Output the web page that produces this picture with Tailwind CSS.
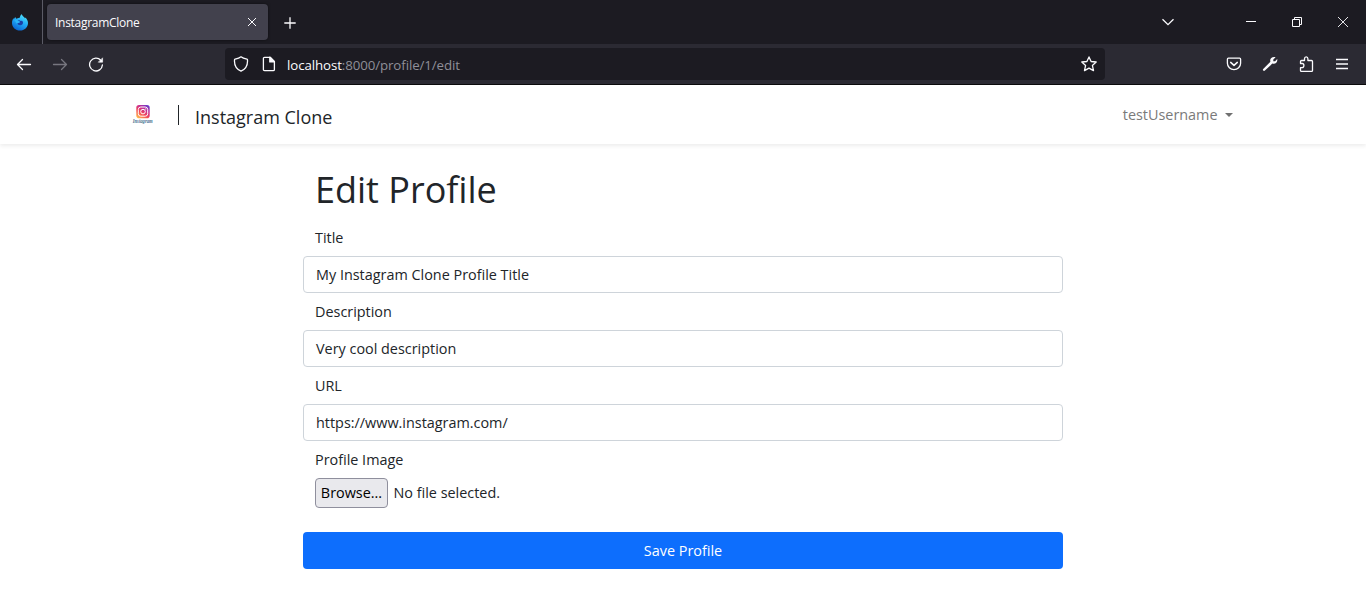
<!DOCTYPE html>
<html lang="en">
<head>
<meta charset="utf-8">
<title>InstagramClone</title>
<script src="https://cdn.jsdelivr.net/npm/@tailwindcss/browser@4"></script>
</head>
<body class="h-[610px] overflow-hidden bg-white font-['Open_Sans',sans-serif] text-[14.4px] leading-[23px] text-[#212529]">
<header class="text-[#fbfbfe]">
  <div class="flex h-11 items-center bg-[#1c1b22]">
    <div class="flex h-11 w-[43px] shrink-0 items-center border-r border-[#5b5b66] pl-3">
      <svg width="16" height="17" viewBox="0 0 16 17">
        <defs><linearGradient id="fx" x1=".8" y1="0" x2=".3" y2="1"><stop stop-color="#54e5fb"/><stop offset=".5" stop-color="#1fa9f7"/><stop offset="1" stop-color="#0a62d2"/></linearGradient></defs>
        <path d="M8 3.600C7.900 2.200 8.600 1 9.800.3c.3 1.300 1.200 1.900 2.200 2.800.5.500.8 1 1 1.500l.3-1.100C15.200 5.300 16 7 16 9c0 4.300-3.600 7.600-8 7.600S0 13.300 0 9c0-1.900.7-3.700 1.600-4.900L1.700 5.400 3.200 3.100 4.200 4.700Z" fill="url(#fx)"/>
        <path d="M6 6.500c1.200-.6 1.900-.2 2.500.4 1.300-.5 2.500.2 2.500 1.700 0 1.700-1.200 2.700-2.800 2.700-1.900 0-3-1.200-2.700-2.700l1.600.3 1.100-1Z" fill="#1b3fa8"/>
        <path d="M2.500 6.300c1.600-.6 3 .2 3.300.8l2.100.3-1.200 1.400-2 .8" fill="#2cb4f8"/>
      </svg>
    </div>
    <div class="ml-1 flex h-9 w-[221px] shrink-0 items-center justify-between rounded bg-[#42414d] pr-[11px] pl-2 shadow-[0_0_3px_#0008]">
      <span class="pt-px text-[12px] tracking-[-0.28px]">InstagramClone</span>
      <svg width="10" height="10" viewBox="0 0 10 10" fill="none" stroke="currentColor"><path d="m1 1 8 8M9 1 1 9"/></svg>
    </div>
    <svg class="mt-px ml-[15.5px] shrink-0" width="12" height="12" viewBox="0 0 12 12" fill="none" stroke="currentColor" stroke-width="1.3"><path d="M6 .3v11.400M.3 6h11.400"/></svg>
    <div class="ml-auto flex items-center pr-[18px]">
      <svg class="mr-[71px]" width="14" height="8" viewBox="0 0 14 8" fill="none" stroke="currentColor" stroke-width="1.300"><path d="m1.500 1.200 5.500 5.500 5.500-5.500"/></svg>
      <svg class="mr-9" width="10" height="10" viewBox="0 0 10 10" fill="currentColor"><path d="M0 4h10v1H0z"/></svg>
      <svg class="mr-9" width="10" height="10" viewBox="0 0 10 10" fill="none" stroke="currentColor"><path d="M.5 2.500h7v7h-7zM2.500 2.500v-2h7v7h-2"/></svg>
      <svg width="10" height="10" viewBox="0 0 10 10" fill="none" stroke="currentColor" stroke-width=".9"><path d="m0 0 10 10M10 0 0 10"/></svg>
    </div>
  </div>
  <div class="flex h-[41px] items-center border-b border-[#0c0c0d] bg-[#2b2a33] pl-4">
    <svg class="shrink-0" width="16" height="16" viewBox="0 0 16 16" fill="none" stroke="currentColor" stroke-width="1.300" stroke-linecap="round" stroke-linejoin="round"><path d="M14.500 8.500H1.500m5-5-5 5 5 5"/></svg>
    <svg class="ml-5 shrink-0 text-[#77767f]" width="16" height="16" viewBox="0 0 16 16" fill="none" stroke="currentColor" stroke-width="1.300" stroke-linecap="round" stroke-linejoin="round"><path d="M1.500 8.500h13m-5-5 5 5-5 5"/></svg>
    <svg class="ml-5 shrink-0" width="16" height="16" viewBox="0 0 16 16" fill="none" stroke="currentColor" stroke-width="1.300" stroke-linecap="round"><path d="M12.800 4.300A6.400 6.400 0 1 0 14.400 9"/><path d="M14.600 2.200v4H10.600z" fill="currentColor" stroke-width=".6"/></svg>
    <div class="ml-[121px] flex h-8 w-[880px] shrink-0 items-center rounded bg-[#1c1b22] px-2">
      <svg class="shrink-0" width="16" height="16" viewBox="0 0 16 16" fill="none" stroke="currentColor" stroke-width="1.300" stroke-linejoin="round"><path d="M8 .8C10 2.400 12.200 2.800 14.400 3.300c.6 5.200-1.100 9.600-6.400 11.900C2.700 12.900 1 8.500 1.600 3.300 3.800 2.800 6 2.400 8 .8Z"/></svg>
      <svg class="ml-3 shrink-0" width="16" height="16" viewBox="0 0 16 16" fill="none" stroke="currentColor" stroke-width="1.300" stroke-linejoin="round"><path d="M3.600 1.300h5.600l4.200 4.200v7.900q0 1.200-1.200 1.200H3.600q-1.200 0-1.200-1.200V2.500q0-1.200 1.200-1.200Z"/><path d="M8.800 1.300v4.600h4.600z" fill="currentColor"/></svg>
      <span class="ml-[10px] pt-0.5 text-[13.300px] tracking-[-0.1px] text-[#8f8f98]"><span class="text-[#fbfbfe]">localhost</span>:8000/profile/1/edit</span>
      <svg class="ml-auto shrink-0" width="16" height="16" viewBox="0 0 16 16" fill="none" stroke="currentColor" stroke-width="1.300" stroke-linejoin="round"><path d="m8 .9 2.100 4.600 5.100.5-3.800 3.400 1.100 5.200L8 12.100l-4.500 2.500 1.100-5.200L.8 6l5.100-.5Z"/></svg>
    </div>
    <div class="ml-auto flex items-center gap-5 pr-4">
      <svg width="16" height="16" viewBox="0 0 16 16" fill="none" stroke="currentColor" stroke-width="1.300" stroke-linecap="round" stroke-linejoin="round"><path d="M2.400 2.200h11.200q1 0 1 1v4.100a6.600 6.400 0 0 1-13.200 0V3.200q0-1 1-1Z"/><path d="m4.700 6.400 3.300 3 3.300-3" stroke-width="1.500"/></svg>
      <svg width="16" height="16" viewBox="0 0 16 16" fill="currentColor"><path d="M13.600 1.300 11.300 3.600v1.700h1.800l2.100-2.200c.7 3.100-1.900 5.500-4.800 4.500l-7.500 7q-.9.700-1.700-.1-.7-.8 0-1.600L8.400 5.700C7.400 2.600 10.300.3 13.600 1.300Z"/></svg>
      <svg width="16" height="16" viewBox="0 0 16 16" fill="none" stroke="currentColor" stroke-width="1.300" stroke-linejoin="round"><path d="M2.500 7.500V5.500q0-1 1-1h3V2.700a1.700 1.900 0 0 1 3.400 0v1.800h3.600q1 0 1 1v8.900q0 1-1 1H3.500q-1 0-1-1v-2.700h1.700a1.700 2.100 0 0 0 0-4.200H2.500Z"/></svg>
      <svg width="16" height="16" viewBox="0 0 16 16" fill="none" stroke="currentColor" stroke-width="1.300"><path d="M2 3.500h12M2 8h12M2 12.500h12"/></svg>
    </div>
  </div>
</header>
<nav class="flex h-[59px] items-center justify-between bg-white pr-[133px] pl-[131px] shadow-[0_2px_4px_rgba(0,0,0,0.075)]">
  <div class="flex items-center">
    <svg class="shrink-0 overflow-visible" width="24" height="24" viewBox="0 -1 24 24">
      <defs>
        <linearGradient id="ig" x1=".1" y1="1" x2=".8" y2="0"><stop stop-color="#ffc34d"/><stop offset=".4" stop-color="#f34755"/><stop offset=".7" stop-color="#c52e96"/><stop offset="1" stop-color="#653bca"/></linearGradient>
      </defs>
      <rect x="5.300" y="1" width="13.400" height="13.200" rx="2.800" fill="url(#ig)"/>
      <g fill="none" stroke="#fff" stroke-width="1"><rect x="7.300" y="3" width="9.400" height="9.200" rx="2.500"/><circle cx="12" cy="7.600" r="2.300"/></g>
      <circle cx="14.800" cy="4.900" r=".6" fill="#fff"/>
      <text x="1.700" y="19" textLength="20" lengthAdjust="spacingAndGlyphs" font-family="Liberation Serif" font-style="italic" font-weight="bold" font-size="5.500" fill="#47708f">Instagram</text>
    </svg>
    <div class="ml-[23px] h-5 w-px bg-[#212529]"></div>
    <span class="mt-1.5 ml-4 text-[18px] leading-[27px]">Instagram Clone</span>
  </div>
  <div class="flex items-center text-[#7a7a7a]"><span>testUsername</span><span class="ml-[7.5px] border-x-4 border-t-4 border-x-transparent border-t-[#707070]"></span></div>
</nav>
<main class="mx-auto flex w-[760px] flex-col pt-[24px]">
  <h1 class="mb-[11px] pl-3 text-[36px] leading-[43px]">Edit Profile</h1>
  <label class="h-[34px] pt-1 pl-3">Title</label>
  <div class="h-[37px] rounded border border-[#ced4da] px-3 py-1.5">My Instagram Clone Profile Title</div>
  <label class="h-[37px] pt-[7px] pl-3">Description</label>
  <div class="h-[37px] rounded border border-[#ced4da] px-3 py-1.5">Very cool description</div>
  <label class="h-[37px] pt-[7px] pl-3">URL</label>
  <div class="h-[37px] rounded border border-[#ced4da] px-3 py-1.5">https://www.instagram.com/</div>
  <label class="h-[37px] pt-[7px] pl-3">Profile Image</label>
  <div class="flex items-center pl-3">
    <button class="flex h-[30px] w-[73px] items-center justify-center rounded border border-[#8f8f9d] bg-[#e9e9ed] pb-0.5 text-black">Browse...</button>
    <span class="ml-[5.5px] pb-0.5">No file selected.</span>
  </div>
  <button class="mt-6 flex h-[37px] items-center justify-center rounded bg-[#0d6efd] text-white">Save Profile</button>
</main>
</body>
</html>
